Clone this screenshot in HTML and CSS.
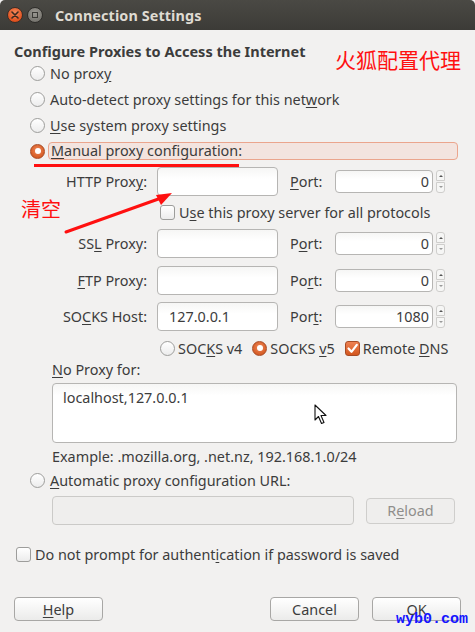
FILE: index.html
```html
<!DOCTYPE html>
<html>
<head>
<meta charset="utf-8">
<link rel="stylesheet" href="styles.css">
</head>
<body>
<div class="window">
  <div class="titlebar">
    <span class="tb-btn tb-close"><svg width="8" height="8" viewBox="0 0 8 8"><path d="M1 1L7 7M7 1L1 7" stroke="#3a2a20" stroke-width="1.6" stroke-linecap="round"/></svg></span>
    <span class="tb-btn tb-max"><span class="tb-sq"></span></span>
    <span class="tb-title">Connection Settings</span>
  </div>

  <div class="content">
    <div class="heading">Configure Proxies to Access the Internet</div>

    <div class="opt"><span class="radio"></span><span class="lbl">No prox<u>y</u></span></div>
    <div class="opt"><span class="radio"></span><span class="lbl">Auto-detect proxy settings for this net<u>w</u>ork</span></div>
    <div class="opt"><span class="radio"></span><span class="lbl"><u>U</u>se system proxy settings</span></div>
    <div class="opt"><span class="radio on"></span><span class="lbl focus"><u>M</u>anual proxy configuration:</span></div>

    <div class="proxies">
      <div class="prow">
        <span class="plabel">HTTP Prox<u>y</u>:</span>
        <span class="input host"></span>
        <span class="portlbl"><u>P</u>ort:</span>
        <span class="input port">0</span>
        <span class="spin"><span class="sp-up"></span><span class="sp-dn"></span></span>
      </div>
      <div class="checkrow"><span class="check"></span><span class="lbl">U<u>s</u>e this proxy server for all protocols</span></div>
      <div class="prow">
        <span class="plabel">SS<u>L</u> Proxy:</span>
        <span class="input host"></span>
        <span class="portlbl">P<u>o</u>rt:</span>
        <span class="input port">0</span>
        <span class="spin"><span class="sp-up"></span><span class="sp-dn"></span></span>
      </div>
      <div class="prow gap8">
        <span class="plabel"><u>F</u>TP Proxy:</span>
        <span class="input host"></span>
        <span class="portlbl">Po<u>r</u>t:</span>
        <span class="input port">0</span>
        <span class="spin"><span class="sp-up"></span><span class="sp-dn"></span></span>
      </div>
      <div class="prow gap7 socks">
        <span class="plabel">SO<u>C</u>KS Host:</span>
        <span class="input host filled">127.0.0.1</span>
        <span class="portlbl">Por<u>t</u>:</span>
        <span class="input port">1080</span>
        <span class="spin"><span class="sp-up"></span><span class="sp-dn"></span></span>
      </div>
      <div class="socksrow">
        <span class="radio"></span><span class="lbl">SOC<u>K</u>S v4</span>
        <span class="radio on sp"></span><span class="lbl">SOCKS <u>v</u>5</span>
        <span class="check on sp2"><svg width="13" height="13" viewBox="0 0 13 13"><path d="M2.5 6.5L5.5 9.8L10.8 2.8" fill="none" stroke="#fff" stroke-width="2.2" stroke-linecap="round" stroke-linejoin="round"/></svg></span><span class="lbl">Remote <u>D</u>NS</span>
      </div>
    </div>

    <div class="noproxy">
      <div class="np-label"><u>N</u>o Proxy for:</div>
      <div class="textarea">localhost,127.0.0.1</div>
      <div class="example">Example: .mozilla.org, .net.nz, 192.168.1.0/24</div>
    </div>

    <div class="opt auto"><span class="radio"></span><span class="lbl"><u>A</u>utomatic proxy configuration URL:</span></div>
    <div class="urlrow">
      <span class="input url"></span>
      <span class="btn disabled">R<u>e</u>load</span>
    </div>

    <div class="checkrow bottomcheck"><span class="check"></span><span class="lbl">Do not prompt for authent<u>i</u>cation if password is saved</span></div>

    <div class="buttons">
      <span class="btn"><u>H</u>elp</span>
      <div class="btn-group">
        <span class="btn">Cancel</span>
        <span class="btn">OK</span>
      </div>
    </div>
  </div>

  <div class="note-title">火狐配置代理</div>
  <div class="note-line"></div>
  <svg class="note-arrow" width="130" height="50" viewBox="0 0 130 50">
    <path d="M6 45L104 10" stroke="#ff1010" stroke-width="3" stroke-linecap="round"/>
    <path d="M112 6L96 8L101 18Z" fill="#ff1010"/>
  </svg>
  <div class="note-clear">清空</div>
  <svg class="cursor" width="14" height="22" viewBox="0 0 14 22">
    <path d="M1 1L1 16L4.5 12.5L7.5 19.5L10 18.5L7 11.5L12 11.5Z" fill="#fff" stroke="#111" stroke-width="1.1" stroke-linejoin="round"/>
  </svg>
  <div class="watermark">wyb0.com</div>
</div>
</body>
</html>
```

FILE: styles.css
```css
* { box-sizing: border-box; }
html, body { margin: 0; padding: 0; }
body {
  width: 475px;
  height: 632px;
  background: #f2f1f0;
  font-family: "Noto Sans", "Open Sans", sans-serif;
  font-size: 14.4px;
  color: #3c3c3c;
  overflow: hidden;
}
u { text-decoration: underline; text-underline-offset: 2px; }

.window {
  position: relative;
  width: 475px;
  height: 632px;
  background: #f2f1f0;
}

.titlebar {
  height: 30px;
  background: linear-gradient(#4a4944, #3c3b37);
  border-radius: 5px 5px 0 0;
  display: flex;
  align-items: center;
  padding-left: 7px;
}
.tb-btn {
  width: 16px;
  height: 16px;
  border-radius: 50%;
  display: flex;
  align-items: center;
  justify-content: center;
}
.tb-close {
  background: radial-gradient(circle at 50% 35%, #f58a5c, #e0521f 70%, #c4431a);
  border: 1px solid #3a2e28;
}
.tb-max {
  margin-left: 4px;
  background: radial-gradient(circle at 50% 35%, #9b9993, #77756f 75%);
  border: 1px solid #2e2d2a;
}
.tb-sq {
  width: 6px;
  height: 6px;
  border: 1px solid #3b3a36;
}
.tb-title {
  margin-left: 12px;
  color: #dfdbd2;
  font-weight: bold;
  font-size: 14.4px;
  letter-spacing: 0.1px;
}

.content {
  padding: 12px 0 0 0;
  display: flex;
  flex-direction: column;
}
.heading {
  height: 18px;
  line-height: 18px;
  padding-left: 14px;
  font-weight: bold;
  font-size: 14.5px;
}

.opt {
  height: 26px;
  display: flex;
  align-items: center;
  padding-left: 30px;
}
.opt .lbl { margin-left: 5px; }
.lbl { white-space: nowrap; }
.lbl.focus {
  margin-left: 3px;
  flex: 0 0 410px;
  height: 18px;
  line-height: 16px;
  padding-left: 2px;
  background: #f3e4df;
  border: 1px solid #eba58d;
  border-radius: 4px;
}

.radio {
  width: 15px;
  height: 15px;
  border-radius: 50%;
  border: 1px solid #9d9d9b;
  background: linear-gradient(#ffffff, #ececec);
  flex: 0 0 15px;
  display: inline-flex;
  align-items: center;
  justify-content: center;
}
.radio.on {
  border-color: #a84b25;
  background: radial-gradient(circle at 50% 40%, #f0895a, #d3571f 80%);
}
.radio.on::after {
  content: "";
  width: 6px;
  height: 6px;
  border-radius: 50%;
  background: #fff;
}
.check {
  width: 15px;
  height: 15px;
  border-radius: 3px;
  border: 1px solid #9d9d9b;
  background: linear-gradient(#ffffff, #ececec);
  flex: 0 0 15px;
  display: inline-flex;
  align-items: center;
  justify-content: center;
}
.check.on {
  border-color: #a84b25;
  background: linear-gradient(#ee8152, #d3571f);
}

.proxies {
  margin-top: 3px;
  display: flex;
  flex-direction: column;
}
.prow {
  height: 29px;
  display: flex;
  align-items: center;
}
.prow.gap8 { margin-top: 8px; }
.prow.gap7 { margin-top: 7px; }
.plabel {
  width: 147px;
  text-align: right;
  white-space: nowrap;
}
.input {
  border: 1px solid #b6b5b3;
  border-radius: 4px;
  background: linear-gradient(#f6f6f5, #ffffff 40%);
  display: flex;
  align-items: center;
}
.input.host {
  margin-left: 10px;
  width: 121px;
  height: 29px;
  padding-left: 11px;
}
.portlbl {
  margin-left: 12px;
  width: 45px;
}
.input.port {
  width: 98px;
  height: 23px;
  justify-content: flex-end;
  padding-right: 3px;
}
.spin {
  margin-left: 3px;
  width: 9px;
  height: 23px;
  display: flex;
  flex-direction: column;
  gap: 1px;
}
.sp-up, .sp-dn {
  flex: 1;
  border: 1px solid #cfcecc;
  background: #f6f6f5;
  position: relative;
}
.sp-up { border-radius: 3px 3px 0 0; }
.sp-dn { border-radius: 0 0 3px 3px; }
.sp-up::after, .sp-dn::after {
  content: "";
  position: absolute;
  left: 2px;
  top: 4px;
  border-left: 2px solid transparent;
  border-right: 2px solid transparent;
}
.sp-up::after { border-bottom: 2px solid #555; }
.sp-dn::after { border-top: 2px solid #999; top: 3px; }

.checkrow {
  height: 33px;
  display: flex;
  align-items: center;
  padding-left: 160px;
}
.checkrow .lbl { margin-left: 4px; }

.socksrow {
  margin-top: 4px;
  height: 26px;
  display: flex;
  align-items: center;
  padding-left: 160px;
}
.socksrow .lbl { margin-left: 3px; }
.socksrow .sp { margin-left: 10px; }
.socksrow .sp2 { margin-left: 10px; }

.noproxy {
  padding-left: 52px;
  display: flex;
  flex-direction: column;
}
.np-label {
  height: 18px;
  line-height: 18px;
}
.textarea {
  margin-top: 4px;
  width: 405px;
  height: 60px;
  border: 1px solid #b6b5b3;
  border-radius: 4px;
  background: linear-gradient(#f6f6f5, #ffffff 20%);
  padding: 4px 0 0 10px;
}
.example {
  height: 28px;
  line-height: 28px;
}
.opt.auto { height: 18px; }

.urlrow {
  margin-top: 7px;
  padding-left: 52px;
  display: flex;
  align-items: center;
}
.input.url {
  width: 302px;
  height: 29px;
  background: #efeeed;
  border-color: #cbcac8;
}
.btn {
  width: 89px;
  height: 26px;
  border: 1px solid #a8a7a5;
  border-radius: 4px;
  background: linear-gradient(#ffffff, #ebebea);
  display: inline-flex;
  align-items: center;
  justify-content: center;
}
.btn.disabled {
  margin-left: 12px;
  color: #8f8e8c;
  border-color: #cfcecc;
  background: #efeeed;
}

.bottomcheck {
  margin-top: 19px;
  height: 20px;
  padding-left: 16px;
}

.buttons {
  margin-top: 33px;
  padding: 0 14px;
  display: flex;
  justify-content: space-between;
}
.buttons .btn { height: 24px; }
.btn-group {
  display: flex;
  gap: 13px;
}

/* annotations overlaid on the screenshot */
.note-title {
  position: absolute;
  left: 335px;
  top: 46px;
  color: #ff1010;
  font-family: "Noto Sans CJK SC", sans-serif;
  font-size: 21px;
  line-height: 26px;
  white-space: nowrap;
}
.note-line {
  position: absolute;
  left: 34px;
  top: 164px;
  width: 205px;
  height: 3px;
  background: #ff1010;
}
.note-arrow {
  position: absolute;
  left: 60px;
  top: 187px;
}
.note-clear {
  position: absolute;
  left: 21px;
  top: 195px;
  color: #ff1010;
  font-family: "Noto Sans CJK SC", sans-serif;
  font-size: 20px;
  line-height: 28px;
}
.cursor {
  position: absolute;
  left: 314px;
  top: 404px;
}
.watermark {
  position: absolute;
  left: 396px;
  top: 610px;
  color: #1515ff;
  font-family: "Liberation Mono", monospace;
  font-weight: bold;
  font-size: 15px;
  line-height: 20px;
}
```
